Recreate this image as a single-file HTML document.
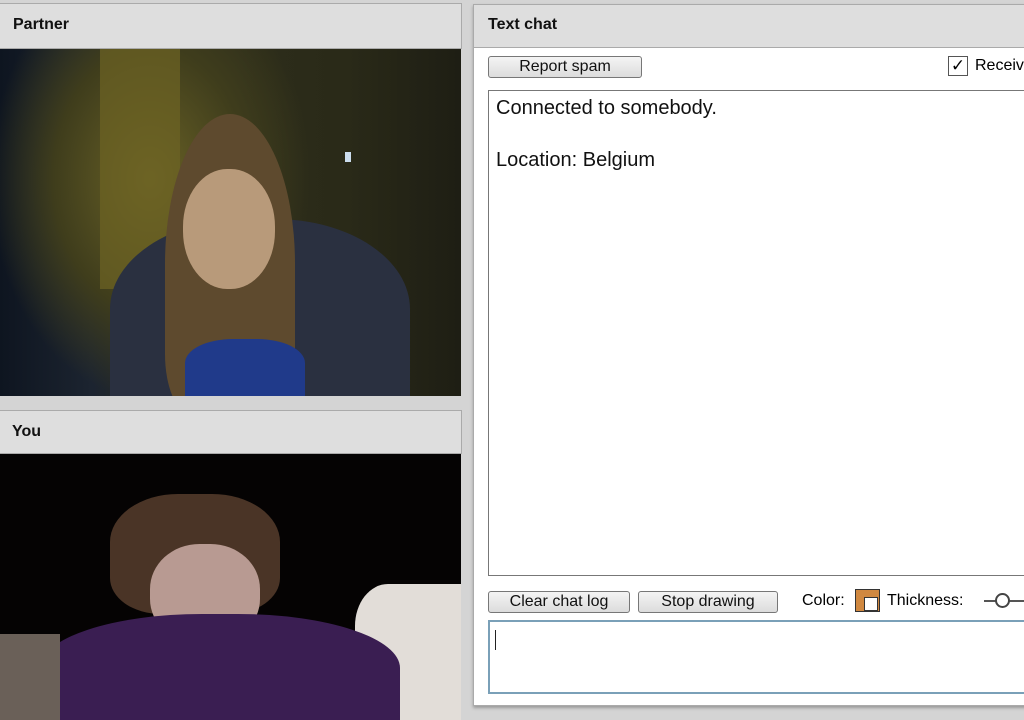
<!DOCTYPE html>
<html><head><style>
*{margin:0;padding:0;box-sizing:border-box}
body{width:1024px;height:720px;overflow:hidden;background:#d4d4d4;font-family:"Liberation Sans",sans-serif;position:relative}
.hdr{position:absolute;background:#dedede;border:1px solid #aaa;font-weight:bold;font-size:16px;color:#111}
.vid{position:absolute;overflow:hidden}
.btn{position:absolute;height:22px;border:1px solid #777;border-radius:3px;background:linear-gradient(#f4f4f4,#dcdcdc);font-size:16px;text-align:center;line-height:20px;color:#111}
.ab{position:absolute}
</style></head><body>
<!-- Partner -->
<div class="hdr" style="left:-2px;top:3px;width:464px;height:46px;padding:12px 0 0 14px">Partner</div>
<div class="vid" style="left:0;top:49px;width:461px;height:347px;background:radial-gradient(ellipse 160px 220px at 150px 130px,#6b6326 0%,#3f3d1c 60%,transparent 100%),linear-gradient(90deg,#0e1520 0%,#1c2430 20%,#2e2e1c 40%,#2a2a18 75%,#1e1e14 100%)">
 <div class="ab" style="left:100px;top:0;width:80px;height:240px;background:#6d6424;opacity:.7"></div>
 <div class="ab" style="left:110px;top:170px;width:300px;height:200px;border-radius:45% 45% 0 0;background:#2a3040"></div>
 <div class="ab" style="left:165px;top:65px;width:130px;height:300px;border-radius:50% 50% 20% 20%;background:#5e4a2e"></div>
 <div class="ab" style="left:183px;top:120px;width:92px;height:120px;border-radius:48%;background:#b89a7a"></div>
 <div class="ab" style="left:185px;top:290px;width:120px;height:60px;border-radius:40% 40% 0 0;background:#203a8a"></div>
 <div class="ab" style="left:345px;top:103px;width:6px;height:10px;background:#cde"></div>
</div>
<!-- You -->
<div class="hdr" style="left:-2px;top:410px;width:464px;height:44px;padding:12px 0 0 13px">You</div>
<div class="vid" style="left:0;top:454px;width:461px;height:266px;background:#050303">
 <div class="ab" style="left:110px;top:40px;width:170px;height:120px;border-radius:40% 40% 30% 30%;background:#4a3426"></div>
 <div class="ab" style="left:150px;top:90px;width:110px;height:100px;border-radius:45%;background:#b89a92"></div>
 <div class="ab" style="left:355px;top:130px;width:110px;height:140px;border-radius:30% 0 0 0;background:#e2ddd8"></div>
 <div class="ab" style="left:40px;top:160px;width:360px;height:120px;border-radius:45% 45% 0 0;background:#3a1e52"></div>
 <div class="ab" style="left:0;top:180px;width:60px;height:90px;background:#6a6058"></div>
</div>
<!-- Right panel -->
<div class="ab" style="left:473px;top:4px;width:560px;height:702px;background:#fff;border:1px solid #aaa;box-shadow:0 2px 3px #999"></div>
<div class="hdr" style="left:473px;top:4px;width:560px;height:44px;padding:11px 0 0 14px;border-left:1px solid #aaa">Text chat</div>
<div class="btn" style="left:488px;top:56px;width:154px">Report spam</div>
<div class="ab" style="left:948px;top:56px;width:20px;height:20px;border:1px solid #555;background:#fff;font-size:17px;line-height:17px;text-align:center">✓</div>
<div class="ab" style="left:975px;top:57px;font-size:16px">Receive</div>
<div class="ab" style="left:488px;top:90px;width:540px;height:486px;border:1px solid #777;background:#fff;font-size:20px;padding:4px 0 0 7px;line-height:26px;color:#111">Connected to somebody.<br><br>Location: Belgium</div>
<div class="btn" style="left:488px;top:591px;width:142px">Clear chat log</div>
<div class="btn" style="left:638px;top:591px;width:140px">Stop drawing</div>
<div class="ab" style="left:802px;top:592px;font-size:16px">Color:</div>
<div class="ab" style="left:855px;top:589px;width:25px;height:23px;border:1px solid #333;background:#d08840"><div style="position:absolute;left:8px;top:7px;width:14px;height:14px;background:#fff;border:1px solid #333"></div></div>
<div class="ab" style="left:887px;top:592px;font-size:16px">Thickness:</div>
<div class="ab" style="left:984px;top:600px;width:40px;height:2px;background:#555"></div>
<div class="ab" style="left:995px;top:593px;width:15px;height:15px;border:2px solid #444;border-radius:50%;background:#fff"></div>
<div class="ab" style="left:488px;top:620px;width:540px;height:74px;border:2px solid #7aa0b8;background:#fff"><div style="position:absolute;left:5px;top:8px;width:1px;height:20px;background:#222"></div></div>
</body></html>
